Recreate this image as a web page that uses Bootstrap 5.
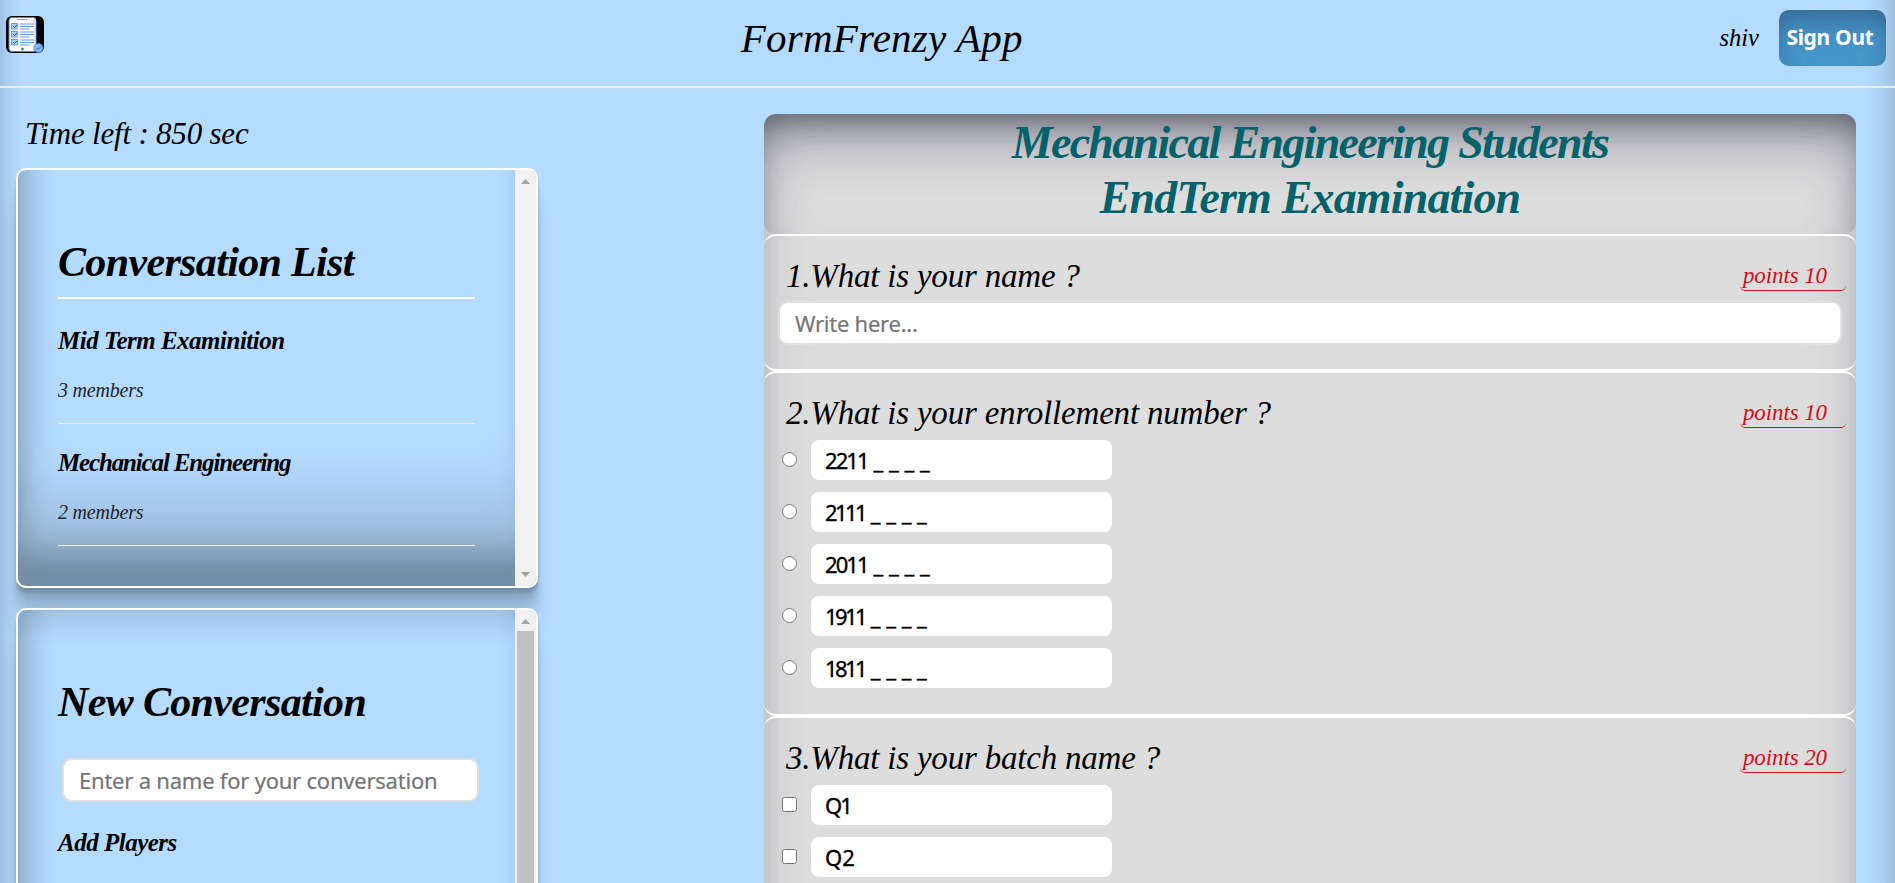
<!DOCTYPE html>
<html lang="en">
<head>
<meta charset="utf-8">
<title>FormFrenzy App</title>
<link href="https://cdn.jsdelivr.net/npm/bootstrap@5.3.0/dist/css/bootstrap.min.css" rel="stylesheet">
<style>
html,body{height:883px;overflow:hidden}
body{color:#000;font-family:"Liberation Serif",serif;font-style:italic;
 background:linear-gradient(90deg,rgba(0,0,0,.12),rgba(0,0,0,.05) 8px,transparent 22px,transparent calc(100% - 30px),rgba(0,0,0,.05) calc(100% - 12px),rgba(0,0,0,.13)),#b5dbff}
.topbar{height:88px;padding:10px 9px 20px 6px;border-bottom:2px solid #eee}
.logo{margin-bottom:7px}
.brand-title{font-size:41px;letter-spacing:.2px;padding-top:1px}
.user-name{font-size:24.5px;margin-right:20px;padding-top:1px}
.signout{width:107px;height:56px;border:0;border-radius:10px;background:#4698cc;color:#fff;font:bold 21px "Noto Sans",sans-serif;padding:0 5px 2px 0;letter-spacing:-.3px;box-shadow:inset 0 22px 40px -10px rgba(50,50,93,.25),inset 0 14px 30px -14px rgba(0,0,0,.3)}
main{height:795px;overflow:hidden}
.side{width:522px;margin-left:16px}
.timer{font-size:31px;line-height:51px;margin:20px 0 9px 9px;letter-spacing:-.2px}
.panel{height:420px;border:2px solid #fff;border-radius:10px;overflow:hidden;margin-bottom:20px;
 box-shadow:inset 0 -29px 31px rgba(0,0,0,.17),inset 0 -45px 37px rgba(0,0,0,.15),inset 0 -99px 50px rgba(0,0,0,.1),0 2px 1px rgba(0,0,0,.06),0 5px 2px rgba(0,0,0,.09),0 10px 5px rgba(0,0,0,.09),0 20px 10px rgba(0,0,0,.09),0 40px 20px rgba(0,0,0,.09)}
.panel.tall{height:620px}
.panel-body{padding:63.5px 40px 0;min-width:0}
.panel h2{font-size:42px;line-height:56px;font-weight:bold;margin:0;letter-spacing:-.65px;white-space:nowrap}
.ruled{padding-bottom:7.5px;border-bottom:2px solid #fff}
.convs{margin-top:3px}
.conv{height:122px;padding-top:21px;border-bottom:1px solid #eee}
.sub{font-size:25px;line-height:36.6px;font-weight:bold;letter-spacing:-.5px}
.sub.snug{letter-spacing:-1.15px}
.members{font-size:20px;line-height:30px;margin-top:15.6px;letter-spacing:-.2px;color:#212529}
.track{width:21px;background:#f1f1f1;flex:none}
.track svg{display:block;flex:none}
.thumb{background:#c1c1c1;margin:0 2px;flex:1}
.field{height:44px;border:2px solid #e0e0e0;border-radius:10px;background:#fff;color:#757575;font:normal 22px/40px "Noto Sans",sans-serif;padding-left:15px;white-space:nowrap;-webkit-text-stroke:.2px #757575;letter-spacing:-.25px}
.name-field{width:417px;margin:28.5px 0 22.6px 4px;letter-spacing:-.22px}
.sheet{width:1092px;height:1400px;flex:none;margin:26px 0 0 226px;border-radius:12px;background:#ddd;box-shadow:inset 0 30px 60px -12px rgba(50,50,93,.25),inset 0 18px 36px -18px rgba(0,0,0,.3)}
.sheet-head{height:120px;border-radius:12px;box-shadow:inset 0 30px 60px -12px rgba(50,50,93,.25),inset 0 18px 36px -18px rgba(0,0,0,.3)}
.sheet-head h1{margin:0;padding-top:1px;font-size:46px;line-height:55px;font-weight:bold;color:#05616a;letter-spacing:-1.7px}
.wide{letter-spacing:-.85px}
.question{border-top:2px solid #fff;border-bottom:2px solid #fff;border-radius:12px;padding:15px 14px 24px}
.q-text{font-size:33px;line-height:50px;padding-left:8px;letter-spacing:-.2px}
.points{font-size:23px;line-height:27px;color:#d0101a;border-bottom:1px solid #d0101a;border-radius:5px;padding:0 19px 0 3px;margin:11.3px -4px 0 0;height:28.5px;letter-spacing:-.1px}
.opts{margin-bottom:-8px}
.opt{height:52px;padding:2px 0 10px 4px}
.opt input{width:15px;height:15px;margin:0 14px 2px 0}
.answer{width:301px;height:40px;border-radius:8px;background:#fff;font:normal 22px/41px "Noto Sans",sans-serif;padding-left:14px;-webkit-text-stroke:.35px #000;white-space:nowrap}
.num{letter-spacing:-1.9px}
.ones .num{letter-spacing:-2.6px}
</style>
</head>
<body>
<header class="topbar d-flex justify-content-between align-items-center">
 <svg class="logo" width="38" height="37" viewBox="0 0 38 37">
  <rect width="38" height="37" rx="6" fill="#000"/>
  <rect x="3" y="1.500" width="27" height="34" rx="3" fill="#fff" stroke="#4a86d8"/>
  <rect x="27" y="3" width="2.500" height="31" fill="#dce8fb"/>
  <path d="M11 3.500h8M20 3.500h1.500" stroke="#6d9be0"/>
  <g fill="#a9cbfa" stroke="#4f92ee" stroke-width=".8"><rect x="5.500" y="7.500" width="6" height="5.500"/><rect x="5.500" y="15.500" width="6" height="5.500"/><rect x="5.500" y="23.500" width="6" height="5.500"/></g>
  <path d="M7 10l1.500 1.500L11 9M7 18l1.500 1.500L11 17M7 26l1.500 1.500L11 25" fill="none" stroke="#1c4f9c"/>
  <path d="M14 8h14M14 10.500h14M14 13h9M14 16h14M14 18.500h14M14 21h9M14 24h14M14 26.500h14M14 29h9" stroke="#5b97ef" stroke-width="1.1"/>
  <circle cx="16.500" cy="33" r="1.500" fill="#4f83d6"/>
  <circle cx="32.500" cy="32" r="4.500" fill="#8abafc" stroke="#3878d8" stroke-width=".8"/>
  <path d="M30.500 32l1.500 1.500 3-3" fill="none" stroke="#245cae"/>
 </svg>
 <div class="brand-title">FormFrenzy App</div>
 <div class="d-flex align-items-center"><span class="user-name">shiv</span><button class="signout">Sign Out</button></div>
</header>
<main class="d-flex align-items-start">
 <aside class="side flex-shrink-0">
  <div class="timer">Time left : 850 sec</div>
  <section class="panel d-flex">
   <div class="panel-body flex-grow-1">
    <h2 class="ruled">Conversation List</h2>
    <div class="convs">
     <div class="conv"><div class="sub">Mid Term Examinition</div><div class="members">3 members</div></div>
     <div class="conv"><div class="sub snug">Mechanical Engineering</div><div class="members">2 members</div></div>
    </div>
   </div>
   <div class="track d-flex flex-column justify-content-between">
    <svg width="21" height="21"><path d="M6 14h9l-4.500-5z" fill="#a3a3a3"/></svg>
    <svg width="21" height="21"><path d="M6 7h9l-4.500 5z" fill="#a3a3a3"/></svg>
   </div>
  </section>
  <section class="panel tall d-flex">
   <div class="panel-body flex-grow-1">
    <h2>New Conversation</h2>
    <div class="field name-field">Enter a name for your conversation</div>
    <div class="sub">Add Players</div>
   </div>
   <div class="track d-flex flex-column">
    <svg width="21" height="21"><path d="M6 14h9l-4.500-5z" fill="#a3a3a3"/></svg>
    <div class="thumb"></div>
   </div>
  </section>
 </aside>
 <section class="sheet">
  <div class="sheet-head text-center"><h1>Mechanical Engineering Students<br><span class="wide">EndTerm Examination</span></h1></div>
  <div class="question">
   <div class="d-flex justify-content-between align-items-start"><div class="q-text">1.What is your name ?</div><div class="points">points 10</div></div>
   <div class="field">Write here...</div>
  </div>
  <div class="question">
   <div class="d-flex justify-content-between align-items-start"><div class="q-text">2.What is your enrollement number ?</div><div class="points">points 10</div></div>
   <div class="opts">
    <div class="opt d-flex align-items-center"><input type="radio" name="enr"><div class="answer"><span class="num">2211</span> _ _ _ _</div></div>
    <div class="opt ones d-flex align-items-center"><input type="radio" name="enr"><div class="answer"><span class="num">2111</span> _ _ _ _</div></div>
    <div class="opt d-flex align-items-center"><input type="radio" name="enr"><div class="answer"><span class="num">2011</span> _ _ _ _</div></div>
    <div class="opt ones d-flex align-items-center"><input type="radio" name="enr"><div class="answer"><span class="num">1911</span> _ _ _ _</div></div>
    <div class="opt ones d-flex align-items-center"><input type="radio" name="enr"><div class="answer"><span class="num">1811</span> _ _ _ _</div></div>
   </div>
  </div>
  <div class="question">
   <div class="d-flex justify-content-between align-items-start"><div class="q-text">3.What is your batch name ?</div><div class="points">points 20</div></div>
   <div class="opts">
    <div class="opt d-flex align-items-center"><input type="checkbox"><div class="answer"><span class="num">Q1</span></div></div>
    <div class="opt d-flex align-items-center"><input type="checkbox"><div class="answer">Q2</div></div>
   </div>
  </div>
 </section>
</main>
<script src="https://cdn.jsdelivr.net/npm/bootstrap@5.3.0/dist/js/bootstrap.bundle.min.js"></script>
</body>
</html>
